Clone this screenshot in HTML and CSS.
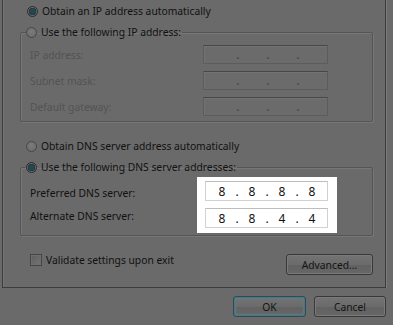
FILE: index.html
```html
<!DOCTYPE html>
<html>
<head>
<meta charset="utf-8">
<link rel="stylesheet" href="styles.css">
</head>
<body>
<div class="panel">
  <div class="opt opt-first">
    <span class="radio on"></span><span class="lbl">Obtain an IP address automatically</span>
  </div>
  <fieldset class="group g-ip">
    <legend class="opt"><span class="radio"></span><span class="lbl">Use the following IP address:</span></legend>
    <div class="grid">
      <span class="dlbl">IP address:</span>
      <div class="ipbox dis"><i>.</i><i>.</i><i>.</i></div>
      <span class="dlbl">Subnet mask:</span>
      <div class="ipbox dis"><i>.</i><i>.</i><i>.</i></div>
      <span class="dlbl">Default gateway:</span>
      <div class="ipbox dis"><i>.</i><i>.</i><i>.</i></div>
    </div>
  </fieldset>
  <div class="opt opt-dns">
    <span class="radio"></span><span class="lbl">Obtain DNS server address automatically</span>
  </div>
  <fieldset class="group g-dns">
    <legend class="opt"><span class="radio on"></span><span class="lbl">Use the following DNS server addresses:</span></legend>
    <div class="dnsgrid">
      <div class="labels">
        <span class="elbl">Preferred DNS server:</span>
        <span class="elbl">Alternate DNS server:</span>
      </div>
      <div class="highlight">
        <div class="ipbox act"><b>8</b><i>.</i><b>8</b><i>.</i><b>8</b><i>.</i><b>8</b></div>
        <div class="ipbox act"><b>8</b><i>.</i><b>8</b><i>.</i><b>4</b><i>.</i><b>4</b></div>
      </div>
    </div>
  </fieldset>
  <div class="bottomrow">
    <label class="check"><span class="box"></span><span class="lbl">Validate settings upon exit</span></label>
    <span class="btn adv">Advanced...</span>
  </div>
</div>
<div class="footer">
  <span class="btn ok">OK</span>
  <span class="btn cancel">Cancel</span>
</div>
</body>
</html>
```
FILE: styles.css
```css
html, body {
  margin: 0;
  padding: 0;
}
body {
  width: 393px;
  height: 325px;
  overflow: hidden;
  background: #6a6a6a;
  font-family: "Noto Sans", "Open Sans", sans-serif;
  font-size: 10.3px;
  color: #111;
}
.panel {
  margin-left: 2px;
  width: 384px;
  height: 288px;
  box-sizing: border-box;
  border-left: 1px solid #3c3c3c;
  border-right: 1px solid #3c3c3c;
  border-bottom: 1px solid #3c3c3c;
  box-shadow: 1px 0 0 #7a7a7a, inset 1px 0 0 #747474;
  padding-top: 3px;
}
.opt {
  display: flex;
  align-items: center;
  height: 16px;
  line-height: 16px;
}
.opt-first {
  padding-left: 24px;
}
.radio {
  width: 11px;
  height: 11px;
  box-sizing: border-box;
  border-radius: 50%;
  border: 1px solid #474747;
  background: radial-gradient(circle at 50% 40%, #7c7c7c 0%, #6e6e6e 70%);
  margin-right: 4px;
  flex: none;
}
.radio.on {
  border-color: #2b2b2b;
  background: radial-gradient(circle, #1e4a58 0 2.5px, #2d3638 3px 3.5px, #6a6a6a 4px);
}
.group {
  margin: 5px 0 0 17px;
  width: 353px;
  box-sizing: border-box;
  border: 1px solid #555;
  box-shadow: inset 1px 1px 0 #777, 1px 1px 0 #777;
  border-radius: 2px;
  padding: 0;
}
.group legend {
  padding: 0 1px 0 0;
  margin-left: 5px;
}
.grid {
  display: grid;
  grid-template-columns: 1fr 125px;
  row-gap: 7px;
  padding: 5px 44px 5px 9px;
  align-items: center;
}
.dlbl {
  color: #535353;
}
.ipbox {
  height: 19px;
  box-sizing: border-box;
  display: flex;
  justify-content: center;
  align-items: center;
}
.ipbox.dis {
  border: 1px solid #5c5c5c;
  border-top-color: #474747;
  background: #6b6b6b;
  box-shadow: inset 1px 1px 0 #737373;
  gap: 22px;
  padding-left: 5px;
}
.ipbox i {
  font-style: normal;
  font-weight: bold;
  width: 8px;
  text-align: center;
}
.ipbox.dis i {
  color: #454545;
}
.opt-dns {
  margin-top: 16px;
  padding-left: 23px;
}
.g-dns {
  margin-top: 5px;
}
.dnsgrid {
  display: flex;
  padding: 2px 35px 2px 9px;
}
.labels {
  flex: 1;
  display: flex;
  flex-direction: column;
  justify-content: space-around;
  padding: 4px 0 5px;
}
.elbl {
  height: 20px;
  line-height: 20px;
}
.highlight {
  background: #fff;
  padding: 4px 9px 5px 8px;
  display: flex;
  flex-direction: column;
  gap: 7px;
  width: 123px;
}
.ipbox.act {
  height: 20px;
  border: 1px solid #d2d2d2;
  border-top-color: #bdbdbd;
  background: #fff;
  color: #111;
  font-size: 12px;
  gap: 0;
  justify-content: flex-start;
  padding-left: 12px;
}
.ipbox.act b {
  font-weight: normal;
  width: 8px;
  text-align: center;
}
.ipbox.act i {
  font-weight: normal;
  width: 22px;
}
.bottomrow {
  display: flex;
  align-items: flex-start;
  margin-top: 17px;
  padding-left: 27px;
  padding-right: 12px;
}
.check {
  flex: 1;
  display: flex;
  align-items: center;
  height: 13px;
}
.box {
  width: 12px;
  height: 12px;
  box-sizing: border-box;
  border: 1px solid #454545;
  background: linear-gradient(135deg, #5f5f5f, #737373);
  box-shadow: inset 0 0 0 1px #6e6e6e;
  margin-right: 4px;
}
.btn {
  display: flex;
  align-items: center;
  justify-content: center;
  height: 21px;
  box-sizing: border-box;
  border: 1px solid #383838;
  border-radius: 3px;
  background: linear-gradient(#737373, #6b6b6b 50%, #626262 51%, #666);
  box-shadow: inset 0 0 0 1px #7a7a7a;
  color: #141414;
}
.adv {
  width: 87px;
  margin-top: 1px;
}
.footer {
  display: flex;
  justify-content: flex-end;
  gap: 8px;
  padding: 8px 7px 0 0;
}
.ok {
  width: 73px;
  border-color: #2a4d57;
  box-shadow: inset 0 0 0 1px #4f7480, inset 0 0 2px 2px #5f7b83;
}
.cancel {
  width: 72px;
}
```
